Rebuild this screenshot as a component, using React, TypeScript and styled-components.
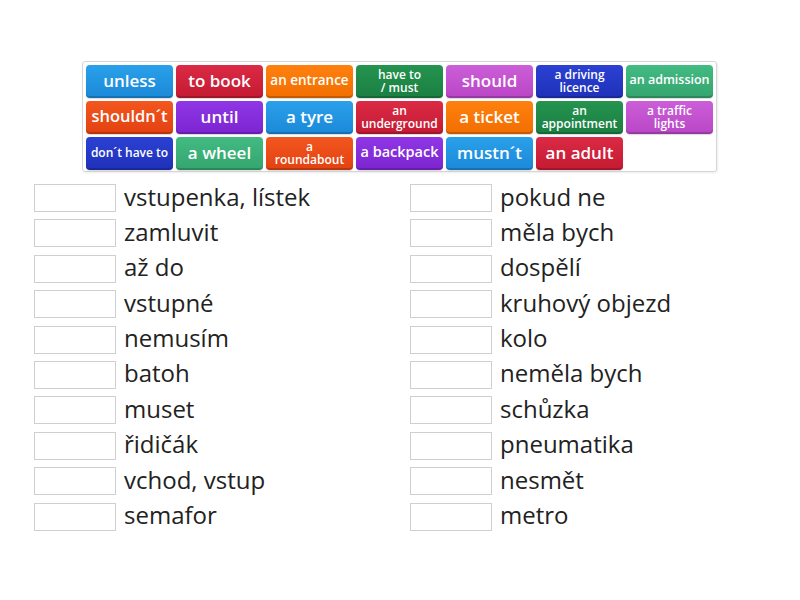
import { createGlobalStyle } from 'styled-components';
import styled from 'styled-components';

const GlobalStyle = createGlobalStyle`
  html, body {
    margin: 0;
    padding: 0;
    background: #ffffff;
    font-family: 'Open Sans', 'Liberation Sans', sans-serif;
  }
`;

const palette = [
  ['#2aa0ea', '#1b89d8'],
  ['#db2a45', '#c41a32'],
  ['#ff7f0f', '#f06f00'],
  ['#24944f', '#1b7f42'],
  ['#cc5ed8', '#b946c6'],
  ['#2c41d3', '#1f31b8'],
  ['#42bb83', '#35a56f'],
  ['#f4561f', '#e14210'],
  ['#9036e6', '#7b25d0'],
];

type Tile = { label: string; size: number; two?: boolean };

const tiles: Tile[] = [
  { label: 'unless', size: 17 },
  { label: 'to book', size: 17 },
  { label: 'an entrance', size: 13.5 },
  { label: 'have to / must', size: 12, two: true },
  { label: 'should', size: 17 },
  { label: 'a driving licence', size: 12, two: true },
  { label: 'an admission', size: 12.5 },
  { label: 'shouldn´t', size: 16.5 },
  { label: 'until', size: 17 },
  { label: 'a tyre', size: 17 },
  { label: 'an underground', size: 12, two: true },
  { label: 'a ticket', size: 17 },
  { label: 'an appointment', size: 12, two: true },
  { label: 'a traffic lights', size: 12, two: true },
  { label: 'don´t have to', size: 12 },
  { label: 'a wheel', size: 17 },
  { label: 'a roundabout', size: 12, two: true },
  { label: 'a backpack', size: 14.5 },
  { label: 'mustn´t', size: 17 },
  { label: 'an adult', size: 17 },
];

const splits: Record<string, string[]> = {
  'have to / must': ['have to', '/ must'],
  'a driving licence': ['a driving', 'licence'],
  'an underground': ['an', 'underground'],
  'an appointment': ['an', 'appointment'],
  'a traffic lights': ['a traffic', 'lights'],
  'a roundabout': ['a', 'roundabout'],
};

const leftItems = [
  'vstupenka, lístek',
  'zamluvit',
  'až do',
  'vstupné',
  'nemusím',
  'batoh',
  'muset',
  'řidičák',
  'vchod, vstup',
  'semafor',
];

const rightItems = [
  'pokud ne',
  'měla bych',
  'dospělí',
  'kruhový objezd',
  'kolo',
  'neměla bych',
  'schůzka',
  'pneumatika',
  'nesmět',
  'metro',
];

const Page = styled.div`
  width: 800px;
  height: 600px;
  padding-top: 61px;
  box-sizing: border-box;
`;

const Pool = styled.div`
  margin-left: 82px;
  width: 635px;
  height: 111px;
  box-sizing: border-box;
  border: 1px solid #d6d6d6;
  border-radius: 3px;
  box-shadow: 1px 1px 2px rgba(0, 0, 0, 0.08);
  padding: 3px 0 0 3px;
  display: grid;
  grid-template-columns: repeat(7, 87px);
  grid-auto-rows: 33px;
  column-gap: 3px;
  row-gap: 3px;
`;

const TileBox = styled.div<{ $top: string; $bottom: string; $size: number; $two?: boolean }>`
  border-radius: 4px;
  background: linear-gradient(${({ $top }) => $top}, ${({ $bottom }) => $bottom});
  box-shadow: inset 0 -2px 0 rgba(0, 0, 0, 0.18), 0 1px 1px rgba(0, 0, 0, 0.15);
  color: #ffffff;
  font-weight: 600;
  font-size: ${({ $size }) => $size}px;
  line-height: ${({ $two, $size }) => ($two ? `${$size + 1}px` : '1')};
  display: flex;
  flex-direction: column;
  align-items: center;
  justify-content: center;
  text-align: center;
  white-space: nowrap;
  padding-bottom: 2px;
  box-sizing: border-box;
  overflow: hidden;
`;

const Lists = styled.div`
  display: grid;
  grid-template-columns: 376px 376px;
  margin-top: 12px;
  margin-left: 34px;
`;

const Column = styled.div`
  display: flex;
  flex-direction: column;
  gap: 7.4px;
`;

const Row = styled.div`
  display: flex;
  align-items: center;
  gap: 8px;
`;

const Slot = styled.div`
  width: 82px;
  height: 28px;
  box-sizing: border-box;
  border: 1px solid #cfcfcf;
  background: #ffffff;
`;

const Label = styled.span`
  font-size: 24px;
  color: #222222;
  line-height: 28px;
  margin-top: -3px;
`;

function TileView({ tile, index }: { tile: Tile; index: number }) {
  const [top, bottom] = palette[index % palette.length];
  const lines = splits[tile.label];
  return (
    <TileBox $top={top} $bottom={bottom} $size={tile.size} $two={tile.two}>
      {lines ? lines.map(l => <span key={l}>{l}</span>) : tile.label}
    </TileBox>
  );
}

export default function App() {
  return (
    <Page>
      <GlobalStyle />
      <Pool>
        {tiles.map((t, i) => (
          <TileView key={t.label} tile={t} index={i} />
        ))}
      </Pool>
      <Lists>
        <Column>
          {leftItems.map(item => (
            <Row key={item}>
              <Slot />
              <Label>{item}</Label>
            </Row>
          ))}
        </Column>
        <Column>
          {rightItems.map(item => (
            <Row key={item}>
              <Slot />
              <Label>{item}</Label>
            </Row>
          ))}
        </Column>
      </Lists>
    </Page>
  );
}
